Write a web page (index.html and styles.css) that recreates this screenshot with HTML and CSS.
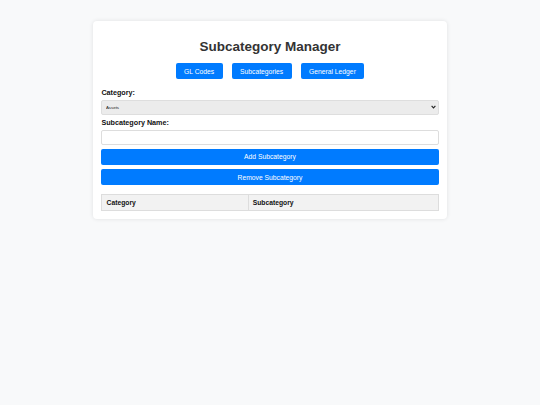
FILE: index.html
```html
<!DOCTYPE html>
<html lang="en">
<head>
<meta charset="utf-8">
<title>Subcategory Manager</title>
<link rel="stylesheet" href="styles.css">
</head>
<body>
<div class="container">
  <h1 class="title">Subcategory Manager</h1>
  <nav class="nav">
    <button class="btn">GL Codes</button>
    <button class="btn">Subcategories</button>
    <button class="btn">General Ledger</button>
  </nav>
  <label class="label" for="category">Category:</label>
  <div class="select-wrap">
    <select class="select" id="category">
      <option>Assets</option>
      <option>Liabilities</option>
      <option>Equity</option>
    </select>
    <svg class="chevron" width="5" height="4" viewBox="0 0 5 4" aria-hidden="true">
      <path d="M0.6 0.8 L2.5 2.9 L4.4 0.8" fill="none" stroke="#222" stroke-width="1.1"/>
    </svg>
  </div>
  <label class="label" for="subname">Subcategory Name:</label>
  <input class="input" id="subname" type="text">
  <button class="btn btn-block">Add Subcategory</button>
  <button class="btn btn-block">Remove Subcategory</button>
  <table class="table">
    <thead>
      <tr><th>Category</th><th>Subcategory</th></tr>
    </thead>
    <tbody></tbody>
  </table>
</div>
</body>
</html>
```
FILE: styles.css
```css
* { box-sizing: border-box; }
body {
  margin: 0;
  background: #f8f9fa;
  font-family: "Liberation Sans", Arial, sans-serif;
  font-size: 6.75px;
  color: #000;
}
.container {
  width: 354px;
  margin: 21px auto;
  padding: 8.4px;
  background: #fff;
  border-radius: 4px;
  box-shadow: 0 0 4px rgba(0, 0, 0, 0.1);
}
.title {
  font-size: 13.5px;
  color: #333;
  text-align: center;
  margin: 10px 0 9px;
}
.nav {
  display: flex;
  justify-content: center;
  gap: 9px;
  margin-bottom: 10px;
}
.btn {
  background: #007bff;
  color: #fff;
  border: none;
  border-radius: 2px;
  padding: 4.2px 8.4px;
  font-family: inherit;
  font-size: 6.75px;
  line-height: normal;
}
.btn-block {
  display: block;
  width: 100%;
  height: 16.2px;
  padding: 0 8.4px;
  margin-top: 4px;
}
.label {
  display: block;
  font-size: 7.2px;
  line-height: 8.3px;
  font-weight: bold;
  color: #111;
  margin-bottom: 2.5px;
}
.select-wrap {
  position: relative;
  margin-bottom: 4.5px;
}
.select {
  display: block;
  width: 100%;
  height: 15px;
  margin: 0;
  padding: 0 3.5px;
  font-family: inherit;
  font-size: 4.4px;
  color: #222;
  background: #ececec;
  border: 1px solid #dedede;
  border-radius: 2px;
  appearance: none;
  -webkit-appearance: none;
}
.chevron {
  position: absolute;
  right: 3px;
  top: 5.5px;
}
.input {
  display: block;
  width: 100%;
  height: 15px;
  margin: 0;
  border: 1px solid #ddd;
  border-radius: 2px;
  background: #fff;
}
.table {
  width: 100%;
  margin-top: 8.4px;
  border-collapse: collapse;
}
.table th {
  background: #f2f2f2;
  border: 1px solid #ddd;
  padding: 4.2px;
  text-align: left;
  font-weight: bold;
  color: #111;
}
```
